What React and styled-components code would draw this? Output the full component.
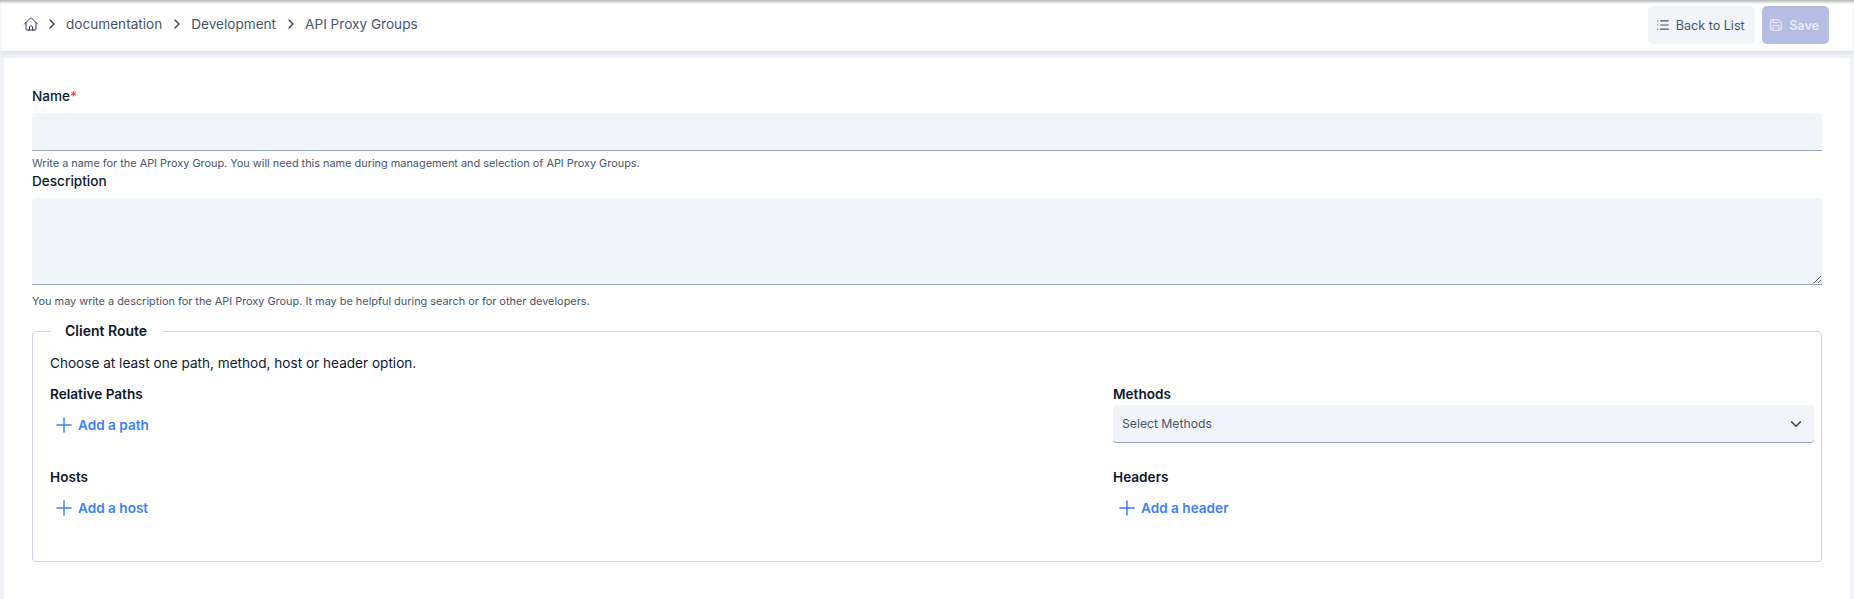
import React from 'react';
import styled, { createGlobalStyle } from 'styled-components';
import { ChevronRight, ChevronDown, List, Save, Plus } from 'lucide-react';
import { HiOutlineHome } from 'react-icons/hi2';

const GlobalStyle = createGlobalStyle`
  html, body {
    margin: 0;
    padding: 0;
    height: 100%;
    background: #eef1f6;
    font-family: 'Inter', 'Liberation Sans', sans-serif;
  }
  * {
    box-sizing: border-box;
  }
`;

const Page = styled.div`
  width: 1854px;
  height: 599px;
  overflow: hidden;
  display: flex;
  flex-direction: column;
`;

const TopBar = styled.header`
  height: 51px;
  flex: none;
  display: flex;
  align-items: center;
  justify-content: space-between;
  padding: 0 25px 0 23px;
  background: #fff;
  box-shadow: inset 0 3px 3px -1px #b4b6ba, 0 1px 3px rgba(100, 116, 139, 0.18);
`;

const Crumbs = styled.nav`
  display: flex;
  align-items: center;
  margin-bottom: 3px;
  color: #475569;
  font-size: 13.6px;
  line-height: 20px;
`;

const HomeIcon = styled(HiOutlineHome)`
  width: 16px;
  height: 16px;
  margin-right: -2px;
  color: #334155;
`;

const Crumb = styled.span`
  color: #475569;
`;

const Separator = styled(ChevronRight)`
  width: 16px;
  height: 16px;
  margin: 0 6.5px;
  color: #334155;
  stroke-width: 2;
`;

const Actions = styled.div`
  display: flex;
  gap: 7px;
  margin-bottom: 1px;
`;

const ActionButton = styled.button`
  height: 38px;
  display: flex;
  align-items: center;
  gap: 6px;
  padding: 0 10px 0 7.5px;
  border: none;
  border-radius: 5px;
  font-family: inherit;
  font-size: 12.6px;
  font-weight: ${({ $primary }) => ($primary ? 600 : 400)};
  color: ${({ $primary }) => ($primary ? '#e9ebf7' : '#475569')};
  background: ${({ $primary }) => ($primary ? '#b6bde2' : '#f1f4f9')};
  svg {
    width: 14px;
    height: 14px;
  }
`;

const Card = styled.main`
  flex: 1;
  margin: 7px 4px 0 4px;
  padding: 28px 28px 0;
  background: #fff;
`;

const Label = styled.label`
  display: block;
  font-size: 13.6px;
  line-height: 20px;
  font-weight: 500;
  color: #0f172a;
`;

const Required = styled.span`
  color: #ef4444;
`;

const TextInput = styled.input`
  display: block;
  width: 100%;
  height: 38px;
  margin-top: 7px;
  padding: 0 10px;
  border: none;
  border-bottom: 1px solid #94a3b8;
  border-radius: 4px 4px 0 0;
  background: #f1f4f9;
  outline: none;
`;

const TextArea = styled.textarea`
  display: block;
  width: 100%;
  height: 87px;
  margin-top: 7px;
  padding: 8px 10px;
  border: none;
  border-bottom: 1px solid #94a3b8;
  border-radius: 4px 4px 0 0;
  background: #f1f4f9;
  outline: none;
  resize: vertical;
`;

const Hint = styled.div`
  margin-top: ${({ $gap }) => $gap}px;
  font-size: 10.9px;
  line-height: 15px;
  color: #475569;
`;

const Fieldset = styled.fieldset`
  height: 241px;
  margin: 12px 0 0;
  padding: 12px 7px 0 17px;
  border: 1px solid #cbd5e1;
  border-radius: 4px;
  min-width: 0;
`;

const Legend = styled.legend`
  padding: 0 15px;
  font-size: 14px;
  line-height: 20px;
  font-weight: 600;
  color: #0f172a;
`;

const Intro = styled.p`
  margin: 0 0 11px;
  font-size: 13.6px;
  line-height: 20px;
  color: #0f172a;
`;

const RouteGrid = styled.div`
  display: grid;
  grid-template-columns: 1fr 701px;
  row-gap: 23px;
`;

const RouteCell = styled.div`
  min-width: 0;
`;

const RouteTitle = styled.div`
  font-size: 13.6px;
  line-height: 20px;
  font-weight: 600;
  color: #0f172a;
`;

const AddButton = styled.button`
  height: 38px;
  margin-top: 2px;
  display: flex;
  align-items: center;
  gap: 2px;
  padding: 0 2px;
  border: none;
  background: none;
  font-family: inherit;
  font-size: 13.6px;
  font-weight: 600;
  color: #3f7ff6;
  svg {
    width: 24px;
    height: 24px;
    stroke-width: 1.5;
  }
`;

const SelectBox = styled.div`
  height: 38px;
  margin-top: 1px;
  display: flex;
  align-items: center;
  justify-content: space-between;
  padding: 0 9px;
  border-bottom: 1px solid #94a3b8;
  border-radius: 4px;
  background: #f1f4f9;
  font-size: 12.2px;
  color: #475569;
  svg {
    width: 18px;
    height: 18px;
    color: #334155;
  }
`;

const routes = [
  { title: 'Relative Paths', add: 'Add a path' },
  { title: 'Methods', select: 'Select Methods' },
  { title: 'Hosts', add: 'Add a host' },
  { title: 'Headers', add: 'Add a header' },
];

export default function App() {
  return (
    <Page>
      <GlobalStyle />
      <TopBar>
        <Crumbs>
          <HomeIcon />
          <Separator />
          <Crumb>documentation</Crumb>
          <Separator />
          <Crumb>Development</Crumb>
          <Separator />
          <Crumb>API Proxy Groups</Crumb>
        </Crumbs>
        <Actions>
          <ActionButton>
            <List />
            Back to List
          </ActionButton>
          <ActionButton $primary>
            <Save />
            Save
          </ActionButton>
        </Actions>
      </TopBar>
      <Card>
        <Label>
          Name<Required>*</Required>
        </Label>
        <TextInput />
        <Hint $gap={5}>Write a name for the API Proxy Group. You will need this name during management and selection of API Proxy Groups.</Hint>
        <Label>Description</Label>
        <TextArea />
        <Hint $gap={9}>You may write a description for the API Proxy Group. It may be helpful during search or for other developers.</Hint>
        <Fieldset>
          <Legend>Client Route</Legend>
          <Intro>Choose at least one path, method, host or header option.</Intro>
          <RouteGrid>
            {routes.map(route => (
              <RouteCell key={route.title}>
                <RouteTitle>{route.title}</RouteTitle>
                {route.add && (
                  <AddButton>
                    <Plus />
                    {route.add}
                  </AddButton>
                )}
                {route.select && (
                  <SelectBox>
                    {route.select}
                    <ChevronDown />
                  </SelectBox>
                )}
              </RouteCell>
            ))}
          </RouteGrid>
        </Fieldset>
      </Card>
    </Page>
  );
}
